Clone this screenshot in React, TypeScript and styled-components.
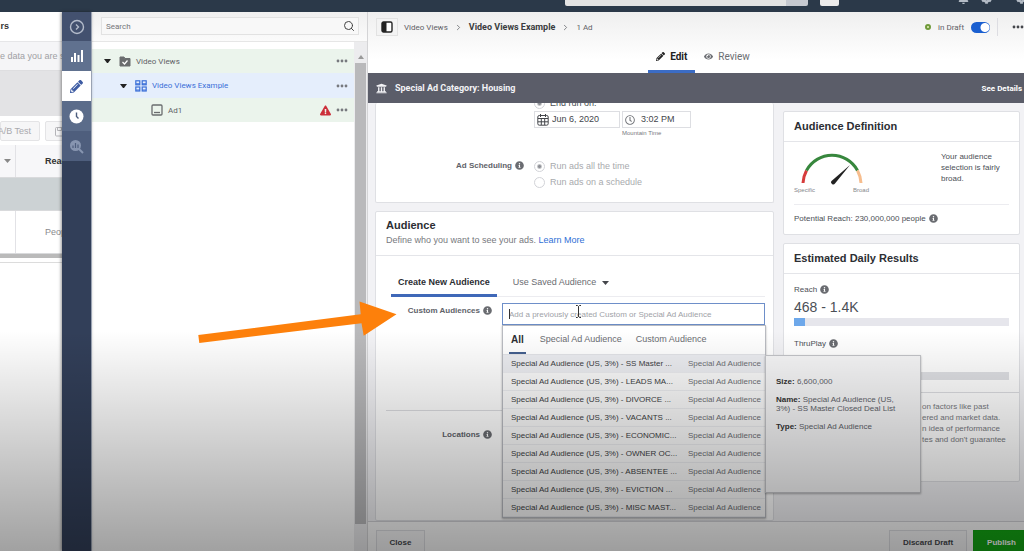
import React from "react";
import styled, { createGlobalStyle, css } from "styled-components";
import { Search, ChevronRight } from "lucide-react";
import { FaInfoCircle, FaPencilAlt, FaEye, FaRegClock, FaUniversity, FaExclamationTriangle, FaCog, FaBell } from "react-icons/fa";

const GlobalStyle = createGlobalStyle`
  *, *::before, *::after { box-sizing: border-box; }
  body {
    margin: 0;
    overflow: hidden;
    background: #fff;
    color: #4b4f56;
    font: 8px/11px "Liberation Sans", Arial, sans-serif;
  }
  button, input { font: inherit; color: inherit; margin: 0; }
  button { border: 0; background: none; padding: 0; cursor: pointer; white-space: nowrap; }
  a { text-decoration: none; }
  ul { list-style: none; margin: 0; padding: 0; }
  h2, p { margin: 0; }
  svg { display: block; flex: none; }
`;

const roboto = css`font-family: Roboto, "Liberation Sans", sans-serif;`;

const Shell = styled.div`
  position: relative;
  display: flex;
  flex-direction: column;
  height: 100vh;
  overflow: hidden;
`;

const Vignette = styled.div`
  position: absolute;
  inset: 0;
  z-index: 20;
  pointer-events: none;
  background: linear-gradient(to bottom, transparent 60%, rgba(0, 0, 0, 0.37) 100%);
`;

const Arrow = styled.svg`
  position: absolute;
  left: 197px;
  top: 300px;
  z-index: 21;
`;

/* ---------- top bar ---------- */

const TopBar = styled.header`
  flex: none;
  display: flex;
  justify-content: flex-end;
  height: 12px;
  overflow: hidden;
  background: #2b3949;
  color: #b4bcc6;
`;

const TopSearch = styled.div`
  width: 243px;
  height: 6px;
  margin-right: 12px;
  border-radius: 0 0 2px 2px;
  background: linear-gradient(to right, #e3e3e3 221px, #c6c9d0 221px);
`;

const TopChip = styled.div`
  width: 19px;
  height: 6px;
  margin-right: 119px;
  border-radius: 0 0 2px 2px;
  background: #ececec;
`;

const TopIcons = styled.div`
  display: flex;
  align-items: flex-end;
  gap: 12px;
  width: 66px;
  height: 4px;
  overflow: hidden;
`;

const Body = styled.div`
  flex: 1;
  display: flex;
  min-height: 0;
`;

/* ---------- page behind the editor ---------- */

const Backdrop = styled.section`
  flex: none;
  width: 62px;
  overflow: hidden;
  white-space: nowrap;
`;

const BackTitle = styled.div`
  display: flex;
  justify-content: flex-end;
  align-items: center;
  width: 9px;
  height: 29px;
  font-size: 9px;
  font-weight: bold;
  color: #333;
`;

const BackNotice = styled.div`
  height: 30px;
  border-top: 1px solid #e6e6e8;
  border-bottom: 1px solid #dedee0;
  background: #f5f5f7;
  color: #a0a0a4;
  font-size: 9px;
  line-height: 29px;
`;

const BackBand = styled.div`
  height: 45px;
  background: #e3e3e5;
`;

const BackTools = styled.div`
  display: flex;
  gap: 5px;
  height: 29px;
  padding: 5px 0 4px;
  color: #a9a9ad;
`;

const BackButton = styled.button`
  flex: none;
  display: flex;
  align-items: center;
  justify-content: flex-end;
  width: 40px;
  padding: 0 8px;
  border: 1px solid #e4e4e6;
  border-radius: 2px;
  background: #f6f6f7;
  font-size: 9px;
`;

const BackRow = styled.div<{ $h: number; $tone?: string }>`
  display: flex;
  height: ${(p) => p.$h}px;
  background: ${(p) => p.$tone || "#fff"};
  border-bottom: 1px solid #d9dadc;
`;

const BackCell = styled.div<{ $strong?: boolean }>`
  display: flex;
  align-items: center;
  flex: none;
  padding-left: 29px;
  border-left: 1px solid #e2e2e6;
  font-size: 9px;
  font-weight: ${(p) => (p.$strong ? "bold" : "normal")};
  color: ${(p) => (p.$strong ? "#333" : "#8a8a8e")};
`;

const BackLead = styled.div`
  flex: none;
  display: flex;
  align-items: center;
  justify-content: center;
  width: 15px;
`;

const BackScroll = styled.div`
  height: 9px;
  border-top: 4px solid #bababa;
  border-bottom: 1px solid #dcdcdc;
`;

/* ---------- icon rail ---------- */

const Rail = styled.nav`
  flex: none;
  width: 30px;
  background: #323f59;
  border-right: 1px solid #9aa3b3;
  box-shadow: -1px 0 3px rgba(0, 0, 0, 0.4);
  z-index: 1;
`;

const RailButton = styled.button<{ $bg: string }>`
  display: flex;
  align-items: center;
  justify-content: center;
  width: 100%;
  height: 30px;
  background: ${(p) => p.$bg};

  &:first-child { height: 29px; }
`;

/* ---------- tree ---------- */

const Tree = styled.section`
  flex: none;
  display: flex;
  flex-direction: column;
  width: 275px;
  background: #fff;
  ${roboto}
`;

const SearchBar = styled.div`
  flex: none;
  height: 30px;
  padding: 5px 8px 6px 9px;
  border-bottom: 1px solid #e6e6e6;
  background: linear-gradient(#f0f0f0, #fbfbfb);
`;

const SearchBox = styled.label`
  display: flex;
  align-items: center;
  height: 100%;
  padding: 0 3px 0 4px;
  border: 1px solid #e2e2e2;
  background: #f8f8f8;
  color: #444;

  input {
    flex: 1;
    min-width: 0;
    border: 0;
    padding: 0;
    background: none;
    outline: 0;
  }
  input::placeholder { color: #75767a; }
`;

const TreeBody = styled.div`
  flex: 1;
  display: flex;
`;

const TreeRows = styled.ul`
  flex: 1;
  padding-top: 7px;
`;

const TreeRow = styled.li<{ $level: number; $active?: boolean }>`
  display: flex;
  align-items: center;
  gap: 5px;
  height: ${(p) => (p.$active ? 25 : 24)}px;
  padding: 0 6px 0 ${(p) => 12 + p.$level * 16}px;
  background: ${(p) => (p.$active ? "#e5eefc" : "#ebf4ec")};
  color: ${(p) => (p.$active ? "#3a6fd8" : "#5f6266")};
`;

const Caret = styled.span<{ $hidden?: boolean }>`
  width: 7px;
  margin-right: 3px;
  border: 3px solid transparent;
  border-top: 4px solid #222;
  border-bottom: 0;
  visibility: ${(p) => (p.$hidden ? "hidden" : "visible")};
`;

const TreeName = styled.span`
  flex: 1;
  white-space: nowrap;
`;

const Scrollbar = styled.div`
  display: flex;
  flex-direction: column;
  align-items: center;
  width: 13px;
  padding: 13px 0 27px;
  background: #ececee;

  &::before {
    content: "";
    border: 3px solid transparent;
    border-top: 0;
    border-bottom: 4px solid #999;
    margin-bottom: 4px;
  }
`;

const Thumb = styled.div`
  flex: 1;
  width: 11px;
  background: #b9b9bb;
`;

/* ---------- editor ---------- */

const Editor = styled.main`
  flex: 1;
  display: flex;
  flex-direction: column;
  min-width: 0;
  border-left: 1px solid #d4d4d6;
`;

const EditorTop = styled.div`
  flex: none;
  background: linear-gradient(#efefef, #fff 48px);
  ${roboto}
`;

const Crumbs = styled.div`
  display: flex;
  align-items: center;
  height: 30px;
  padding-left: 8px;
  gap: 6px;
  color: #5f6166;
  white-space: nowrap;

  strong { font-size: 9px; color: #3a3c40; }
`;

const PanelButton = styled.button`
  display: flex;
  align-items: center;
  justify-content: center;
  width: 22px;
  height: 18px;
  border: 1px solid #e2e2e2;
  background: #f3f3f3;
`;

const Status = styled.div`
  display: flex;
  align-items: center;
  gap: 7px;
  height: 18px;
  margin-left: auto;
`;

const Dot = styled.span`
  width: 6px;
  height: 6px;
  border: 2px solid #6f9a3a;
  border-radius: 50%;
  background: #e8f0c0;
`;

const Toggle = styled.input`
  appearance: none;
  width: 19px;
  height: 11px;
  border-radius: 6px;
  background: radial-gradient(circle at 14px 50%, #fff 4px, #1a5fd0 5px);
`;

const More = styled.button`
  height: 18px;
  padding-left: 14px;
  border-left: 1px solid #dddde2;
`;

const Tabs = styled.div`
  display: flex;
  justify-content: center;
  height: 31px;
  padding-left: 14px;
  gap: 1px;
`;

const EditorTab = styled.button<{ $active?: boolean }>`
  display: flex;
  align-items: center;
  gap: 5px;
  padding: 0 8px;
  border-bottom: 3px solid ${(p) => (p.$active ? "#3b6cc5" : "transparent")};
  font-size: 10px;
  font-weight: ${(p) => (p.$active ? "bold" : "normal")};
  color: ${(p) => (p.$active ? "#222" : "#6b6d72")};
`;

const Banner = styled.div`
  flex: none;
  display: flex;
  align-items: center;
  gap: 8px;
  height: 30px;
  padding: 0 2px 0 8px;
  background: #5b5d69;
  color: #f3f3f6;
  font-size: 9px;
  font-weight: bold;
  ${roboto}

  a { margin-left: auto; color: #fff; font-size: 8px; }
`;

const Content = styled.div`
  flex: 1;
  min-height: 0;
  display: grid;
  grid-template-columns: minmax(0, 1fr) 237px;
  gap: 9px;
  padding: 0 4px 0 7px;
  overflow: hidden;
  background: #f2f2f5;
`;

const Column = styled.div`
  display: flex;
  flex-direction: column;
  gap: 8px;
  min-width: 0;
`;

const Side = styled(Column)`
  padding-top: 8px;
`;

const Card = styled.section<{ $grow?: boolean }>`
  flex: ${(p) => (p.$grow ? "1" : "none")};
  border: 1px solid #dfe0e4;
  border-radius: 2px;
  background: #fff;
`;

const ScheduleCard = styled(Card)`
  padding-bottom: 12px;
  border-top: 0;
`;

const Field = styled.div<{ $label: number }>`
  display: grid;
  grid-template-columns: ${(p) => p.$label}px minmax(0, 1fr);
  column-gap: 10px;
`;

const Label = styled.div`
  display: flex;
  align-items: center;
  justify-content: flex-end;
  gap: 3px;
  height: 15px;
  font-weight: bold;
  color: #606269;
  white-space: nowrap;
`;

const Clip = styled.div`
  display: flex;
  align-items: flex-end;
  height: 6px;
  margin-bottom: 2px;
  overflow: hidden;
`;

const Radio = styled.label<{ $muted?: boolean; $h?: number }>`
  display: flex;
  align-items: center;
  gap: 5px;
  height: ${(p) => p.$h || 16}px;
  font-size: 9px;
  color: ${(p) => (p.$muted ? "#a8aaae" : "#4b4f56")};

  input {
    appearance: none;
    width: 11px;
    height: 11px;
    border: 1px solid #d2d3d8;
    border-radius: 50%;
    background: #fff;
  }
  input:checked { background: radial-gradient(circle, #8d8f95 1px, #fff 3px); }
`;

const DateRow = styled.div`
  display: flex;
  gap: 2px;
`;

const Picker = styled.label<{ $w: number; $gap: number }>`
  display: flex;
  align-items: center;
  gap: ${(p) => p.$gap}px;
  width: ${(p) => p.$w}px;
  height: 17px;
  padding: 0 3px 0 2px;
  border: 1px solid #dddee2;
  color: #44464b;

  input {
    flex: 1;
    min-width: 0;
    border: 0;
    padding: 0;
    outline: 0;
    background: none;
    font-size: 9px;
  }
`;

const Zone = styled.div`
  height: 30px;
  padding-left: 88px;
  font-size: 6px;
  line-height: 11px;
  color: #77797e;
`;

const CardTitle = styled.h2`
  font-size: 11px;
  line-height: 15px;
  color: #2c2e33;
`;

const AudienceHead = styled.div`
  padding: 6px 10px 7px;
  border-bottom: 1px solid #e4e5e9;
  font-size: 9px;
  line-height: 15px;
  color: #77797e;

  a { color: #2f6fd6; }
`;

const AudienceTabs = styled.div`
  display: flex;
  height: 26px;
  margin: 15px 8px 6px 15px;
  border-bottom: 1px solid #ececf0;
`;

const AudienceTab = styled.button<{ $active?: boolean }>`
  display: flex;
  align-items: center;
  justify-content: center;
  gap: 6px;
  height: 26px;
  padding: 0 ${(p) => (p.$active ? 7 : 16)}px;
  border-bottom: 3px solid ${(p) => (p.$active ? "#3f68b8" : "transparent")};
  font-size: 9px;
  font-weight: ${(p) => (p.$active ? "bold" : "normal")};
  color: ${(p) => (p.$active ? "#2c2e33" : "#6a6c71")};
`;

const Combo = styled.div`
  position: relative;
  height: 92px;
  margin-right: 8px;
`;

const ComboInput = styled.input`
  display: block;
  width: 100%;
  height: 22px;
  padding: 0 6px;
  border: 1px solid #6e8fc9;
  background: #fff;
  outline: 0;

  &::placeholder { color: #a0a2a7; opacity: 1; }
`;

const Excluded = styled.div`
  height: 46px;
  margin-top: 23px;
  border: 1px solid #9a9ca0;
`;

const IBeam = styled.svg`
  position: absolute;
  left: 73px;
  top: 2px;
`;

const TextCaret = styled.span`
  position: absolute;
  left: 7px;
  top: 6px;
  width: 1px;
  height: 10px;
  background: #333;
`;

const Dropdown = styled.div`
  position: absolute;
  left: 0;
  right: -1px;
  top: 22px;
  z-index: 5;
  border: 1px solid #b9bbc1;
  background: #fafafa;
  box-shadow: 0 1px 2px rgba(0, 0, 0, 0.3);
`;

const DropTabs = styled.div`
  display: flex;
  gap: 14px;
  height: 29px;
  padding-left: 6px;
  border-bottom: 1px solid #e2e3e7;
  background: #fff;
`;

const DropTab = styled.button<{ $active?: boolean }>`
  padding: 0 ${(p) => (p.$active ? 2 : 0)}px;
  border-bottom: 2px solid ${(p) => (p.$active ? "#44608f" : "transparent")};
  font-size: ${(p) => (p.$active ? 10 : 9)}px;
  font-weight: ${(p) => (p.$active ? "bold" : "normal")};
  color: ${(p) => (p.$active ? "#2c2e33" : "#6a6c71")};
`;

const Option = styled.li<{ $active?: boolean }>`
  display: grid;
  grid-template-columns: minmax(0, 1fr) 75px;
  column-gap: 8px;
  align-items: center;
  height: 18px;
  padding: 0 2px 0 8px;
  border-bottom: 1px solid #ebecef;
  background: ${(p) => (p.$active ? "#ecedf1" : "transparent")};
  white-space: nowrap;

  span:first-child { overflow: hidden; text-overflow: ellipsis; color: #3c3e43; }
  span:last-child { color: #6d6f74; }
`;

const Tip = styled.aside`
  position: absolute;
  left: 100%;
  top: 29px;
  width: 156px;
  height: 138px;
  padding: 21px 24px 0 10px;
  border: 1px solid #c3c4c8;
  background: #f6f6f7;
  box-shadow: 0 1px 2px rgba(0, 0, 0, 0.3);
  line-height: 9px;
  color: #606269;

  p { margin-bottom: 9px; }
  strong { color: #333; }
`;

const Rule = styled.hr`
  height: 1px;
  margin: 15px 10px 16px;
  border: 0;
  background: #dcdde1;
`;

const SideTitle = styled(CardTitle)`
  padding: 7px 10px;
  border-bottom: 1px solid #e4e5e9;
`;

const GaugeRow = styled.div`
  display: flex;
  justify-content: space-between;
  margin: 0 10px;
  height: 63px;
  padding-top: 9px;
  border-bottom: 1px solid #ececf0;

  p { width: 68px; }
`;

const GaugeLabels = styled.div`
  display: flex;
  justify-content: space-between;
  width: 75px;
  font-size: 6px;
  color: #85878c;
`;

const WithInfo = styled.div<{ $pad?: string }>`
  display: flex;
  align-items: center;
  gap: 3px;
  padding: ${(p) => p.$pad || "0"};
  white-space: nowrap;
`;

const Results = styled.div`
  padding: 10px 10px 0;
`;

const Figure = styled.div`
  height: 20px;
  font-size: 14px;
  line-height: 24px;
`;

const Bar = styled.div<{ $fill?: boolean }>`
  height: 8px;
  margin: 3px 0 12px;
  background: ${(p) => (p.$fill ? "linear-gradient(to right, #6ea8ea 11px, #e6e6ec 11px)" : "#dfe0e4")};
`;

const Disclaimer = styled.p`
  height: 89px;
  padding: 8px 0 0 138px;
  border-top: 1px solid #dcdde1;
  color: #77797e;
  white-space: nowrap;
`;

const Footer = styled.footer`
  flex: none;
  display: flex;
  gap: 6px;
  height: 30px;
  padding: 8px 0 0 8px;
  overflow: hidden;
  border-top: 1px solid #d2d2d6;
  background: #fafafa;
`;

const FootButton = styled.button<{ $w: number; $primary?: boolean }>`
  width: ${(p) => p.$w}px;
  height: 24px;
  padding-left: ${(p) => (p.$primary ? 6 : 0)}px;
  border: 1px solid ${(p) => (p.$primary ? "#12a012" : "#dcdde1")};
  background: ${(p) => (p.$primary ? "#14a514" : "#f6f6f7")};
  color: ${(p) => (p.$primary ? "#fff" : "#44464b")};
  font-weight: bold;
`;

const Spacer = styled.span`
  flex: 1;
`;

const Info = () => <FaInfoCircle size={9} color="#6a6c71" />;

const Dots = ({ color = "#77797e" }: { color?: string }) => (
  <svg width="12" height="4" viewBox="0 0 12 4" fill={color}>
    <circle cx="2" cy="2" r="1.4" /><circle cx="6" cy="2" r="1.4" /><circle cx="10" cy="2" r="1.4" />
  </svg>
);

const DownMark = ({ color = "#44464b" }: { color?: string }) => (
  <svg width="7" height="4" viewBox="0 0 7 4"><path d="M0 0h7L3.500 4z" fill={color} /></svg>
);

const audiences = ["SS Master ...", "LEADS MA...", "DIVORCE ...", "VACANTS ...", "ECONOMIC...", "OWNER OC...", "ABSENTEE ...", "EVICTION ...", "MISC MAST..."];

export default function App() {
  return (
    <Shell>
      <GlobalStyle />
      <TopBar>
        <TopSearch />
        <TopChip />
        <TopIcons><FaBell size={11} /><FaCog size={11} /><Spacer /><FaCog size={11} /></TopIcons>
      </TopBar>
      <Body>
        <Backdrop>
          <BackTitle>rs</BackTitle>
          <BackNotice>e data you are se</BackNotice>
          <BackBand />
          <BackTools>
            <BackButton>A/B Test</BackButton>
            <BackButton aria-label="Rules">
              <svg width="11" height="11" viewBox="0 0 11 11" fill="none" stroke="#b4b4b8"><rect x="1.500" y="1.500" width="8" height="8.500" rx="1" /><path d="M3.500 1.500v3h4v-3" /></svg>
              <Spacer />
            </BackButton>
          </BackTools>
          <BackRow $h={33} $tone="#f7f7f9">
            <BackLead><DownMark color="#888" /></BackLead>
            <BackCell $strong>Reac</BackCell>
          </BackRow>
          <BackRow $h={33} $tone="#ccd2d4" />
          <BackRow $h={43}>
            <BackLead />
            <BackCell>Peop</BackCell>
          </BackRow>
          <BackScroll />
        </Backdrop>

        <Rail>
          <RailButton $bg="#43516f" aria-label="Expand">
            <svg width="16" height="16" viewBox="0 0 16 16" fill="none" stroke="#b4bccb" strokeWidth="1.400"><circle cx="8" cy="8" r="6.500" /><path d="M7 5.500 9.500 8 7 10.500" /></svg>
          </RailButton>
          <RailButton $bg="#60718f" aria-label="Charts">
            <svg width="14" height="14" viewBox="0 0 14 14" fill="#fff"><path d="M1 8h2v5H1zM4 4h2v9H4zM7.500 6h2v7h-2zM11 1h2v12h-2z" /></svg>
          </RailButton>
          <RailButton $bg="#fff" aria-label="Edit"><FaPencilAlt size={13} color="#3d5ba3" /></RailButton>
          <RailButton $bg="#5b6c8a" aria-label="History">
            <svg width="15" height="15" viewBox="0 0 15 15"><circle cx="7.500" cy="7.500" r="7" fill="#fff" /><path d="M7.500 3.500v4l2 2" fill="none" stroke="#4b5c7c" strokeWidth="1.400" /></svg>
          </RailButton>
          <RailButton $bg="#4e5e7d" aria-label="Inspect">
            <svg width="15" height="15" viewBox="0 0 15 15"><circle cx="6.500" cy="6.500" r="5.500" fill="#8795b0" /><path d="m10 10 4 4" stroke="#8795b0" strokeWidth="2" /><path d="M4 9V6.500M6.500 9V4M9 9V5.500" stroke="#4e5e7d" strokeWidth="1.200" /></svg>
          </RailButton>
        </Rail>

        <Tree>
          <SearchBar>
            <SearchBox>
              <input type="text" placeholder="Search" aria-label="Search" />
              <Search size={12} />
            </SearchBox>
          </SearchBar>
          <TreeBody>
            <TreeRows>
              <TreeRow $level={0}>
                <Caret />
                <svg width="12" height="11" viewBox="0 0 12 11"><path d="M1 1h4l1 1.500h5V10H1z" fill="#6a6c6e" stroke="#6a6c6e" strokeLinejoin="round" /><path d="m3.500 6 2 2 3-3.500" fill="none" stroke="#fff" strokeWidth="1.200" /></svg>
                <TreeName>Video Views</TreeName>
                <Dots />
              </TreeRow>
              <TreeRow $level={1} $active>
                <Caret />
                <svg width="12" height="12" viewBox="0 0 12 12" fill="none" stroke="#3a6fd8" strokeWidth="1.200"><rect x=".8" y=".8" width="4" height="4" /><rect x="7.200" y=".8" width="4" height="4" /><rect x=".8" y="7" width="4" height="4" /><rect x="7.200" y="7" width="4" height="4" /><path d="M1 3.800h4M7 3.800h4M1 10h4M7 10h4" /></svg>
                <TreeName>Video Views Example</TreeName>
                <Dots />
              </TreeRow>
              <TreeRow $level={2}>
                <Caret $hidden />
                <svg width="12" height="12" viewBox="0 0 12 12" fill="none" stroke="#6a6c6e" strokeWidth="1.300"><rect x="1" y="1" width="10" height="10" rx="1" /><path d="M3 8.500h6" /></svg>
                <TreeName>Ad1</TreeName>
                <FaExclamationTriangle size={11} color="#cc2f3a" />
                <Dots />
              </TreeRow>
            </TreeRows>
            <Scrollbar><Thumb /></Scrollbar>
          </TreeBody>
        </Tree>

        <Editor>
          <EditorTop>
            <Crumbs>
              <PanelButton aria-label="Toggle panel">
                <svg width="12" height="12" viewBox="0 0 12 12"><rect x="1" y="1" width="10" height="10" rx="1.500" fill="#fff" stroke="#222" strokeWidth="1.400" /><path d="M1 1h4.500v10H1z" fill="#222" /></svg>
              </PanelButton>
              <span>Video Views</span>
              <ChevronRight size={9} />
              <strong>Video Views Example</strong>
              <ChevronRight size={9} />
              <span>1 Ad</span>
              <Status>
                <Dot />
                <label htmlFor="draft">in Draft</label>
                <Toggle id="draft" type="checkbox" role="switch" defaultChecked />
                <More aria-label="More"><Dots color="#44464b" /></More>
              </Status>
            </Crumbs>
            <Tabs>
              <EditorTab $active><FaPencilAlt size={9} />Edit</EditorTab>
              <EditorTab><FaEye size={9} />Review</EditorTab>
            </Tabs>
          </EditorTop>
          <Banner>
            <FaUniversity size={11} />
            Special Ad Category: Housing
            <a href="#details">See Details</a>
          </Banner>

          <Content>
            <Column>
              <ScheduleCard>
                <Field $label={148}>
                  <span />
                  <div>
                    <Clip><Radio $h={11}><input type="radio" name="end" defaultChecked />End run on:</Radio></Clip>
                    <DateRow>
                      <Picker $w={86} $gap={3}>
                        <svg width="12" height="12" viewBox="0 0 12 12" fill="none" stroke="#44464b"><rect x=".8" y="1.500" width="10.400" height="9.700" rx="1.500" /><path d="M1 4.500h10M1 7.800h10M4.300 4.500V11M7.700 4.500V11M3.500 0v3M8.500 0v3" /></svg>
                        <input aria-label="End date" defaultValue="Jun 6, 2020" />
                      </Picker>
                      <Picker $w={69} $gap={6}>
                        <FaRegClock size={10} color="#77797e" />
                        <input aria-label="End time" defaultValue="3:02 PM" />
                      </Picker>
                    </DateRow>
                    <Zone>Mountain Time</Zone>
                  </div>
                </Field>
                <Field $label={148}>
                  <Label>Ad Scheduling <Info /></Label>
                  <div>
                    <Radio $muted><input type="radio" name="sched" defaultChecked />Run ads all the time</Radio>
                    <Radio $muted><input type="radio" name="sched" />Run ads on a schedule</Radio>
                  </div>
                </Field>
              </ScheduleCard>

              <Card $grow>
                <AudienceHead>
                  <CardTitle>Audience</CardTitle>
                  Define who you want to see your ads. <a href="#learn">Learn More</a>
                </AudienceHead>
                <AudienceTabs>
                  <AudienceTab $active>Create New Audience</AudienceTab>
                  <AudienceTab>Use Saved Audience <DownMark /></AudienceTab>
                </AudienceTabs>
                <Field $label={116}>
                  <Label as="label" htmlFor="custom">Custom Audiences <Info /></Label>
                  <Combo>
                    <ComboInput id="custom" placeholder="Add a previously created Custom or Special Ad Audience" />
                    <TextCaret />
                    <IBeam width="7" height="13" viewBox="0 0 7 13" fill="none" stroke="#333"><path d="M1 .5h1.500l1 1 1-1H6M3.500 1.500v10M1 12.500h1.500l1-1 1 1H6" /></IBeam>
                    <Excluded />
                    <Dropdown>
                      <DropTabs>
                        <DropTab $active>All</DropTab>
                        <DropTab>Special Ad Audience</DropTab>
                        <DropTab>Custom Audience</DropTab>
                      </DropTabs>
                      <ul role="listbox">
                        {audiences.map((name, i) => (
                          <Option key={name} role="option" aria-selected={i === 0} $active={i === 0}>
                            <span>Special Ad Audience (US, 3%) - {name}</span>
                            <span>Special Ad Audience</span>
                          </Option>
                        ))}
                      </ul>
                      <Tip>
                        <p><strong>Size:</strong> 6,600,000</p>
                        <p><strong>Name:</strong> Special Ad Audience (US, 3%) - SS Master Closed Deal List</p>
                        <p><strong>Type:</strong> Special Ad Audience</p>
                      </Tip>
                    </Dropdown>
                  </Combo>
                </Field>
                <Rule />
                <Field $label={116}>
                  <Label>Locations <Info /></Label>
                </Field>
              </Card>
            </Column>

            <Side>
              <Card>
                <SideTitle>Audience Definition</SideTitle>
                <GaugeRow>
                  <div>
                    <svg width="75" height="34" viewBox="0 0 75 34" fill="none" strokeWidth="3">
                      <path d="M9 32A29 29 0 0 1 12.500 19.500" stroke="#d63c3c" />
                      <path d="M12.500 19.500A29 29 0 0 1 63.500 19.500" stroke="#37873d" />
                      <path d="M63.500 19.500A29 29 0 0 1 67 32" stroke="#f6bd8e" />
                      <path d="M37.500 30 56 14 41 32.500A2 2 0 0 1 37.500 30z" fill="#222" />
                    </svg>
                    <GaugeLabels><span>Specific</span><span>Broad</span></GaugeLabels>
                  </div>
                  <p>Your audience selection is fairly broad.</p>
                </GaugeRow>
                <WithInfo $pad="8px 10px 10px">Potential Reach: 230,000,000 people <Info /></WithInfo>
              </Card>
              <Card>
                <SideTitle>Estimated Daily Results</SideTitle>
                <Results>
                  <WithInfo>Reach <Info /></WithInfo>
                  <Figure>468 - 1.4K</Figure>
                  <Bar $fill />
                  <WithInfo>ThruPlay <Info /></WithInfo>
                  <Figure />
                  <Bar />
                </Results>
                <Disclaimer>
                  on factors like past<br />
                  ered and market data.<br />
                  n idea of performance<br />
                  tes and don't guarantee
                </Disclaimer>
              </Card>
            </Side>
          </Content>

          <Footer>
            <FootButton $w={49}>Close</FootButton>
            <Spacer />
            <FootButton $w={78}>Discard Draft</FootButton>
            <FootButton $w={51} $primary>Publish</FootButton>
          </Footer>
        </Editor>
      </Body>
      <Vignette />
      <Arrow width="202" height="44" viewBox="0 0 202 44">
        <path d="M1.300 35 163.700 14.300 162.500 1.500 199.500 14.300 166.700 35.700 164.500 23.300 2.300 43z" fill="#fd800b" />
      </Arrow>
    </Shell>
  );
}
